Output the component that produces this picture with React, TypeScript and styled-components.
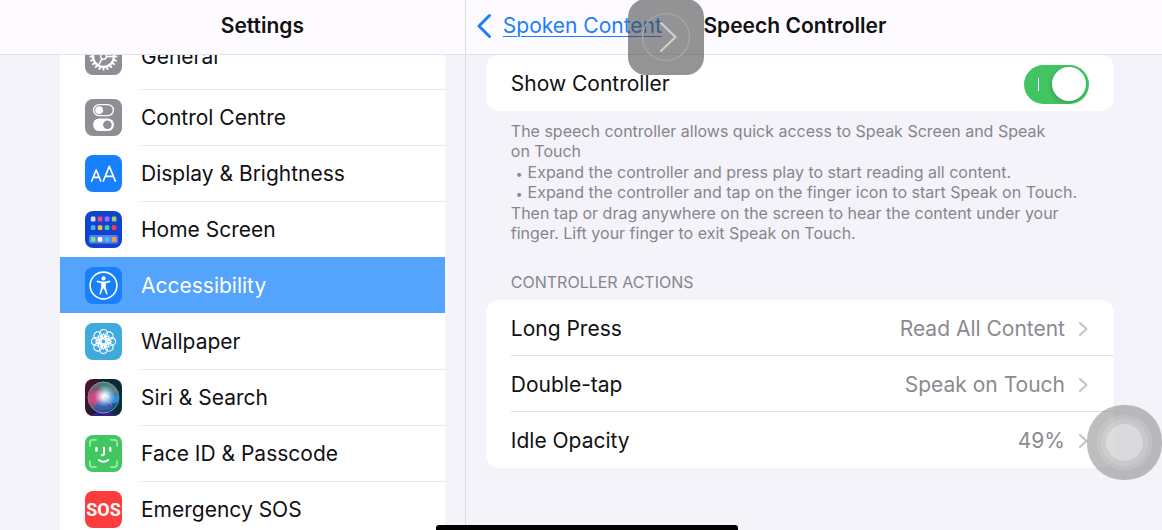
import React from "react";
import styled, { createGlobalStyle } from "styled-components";

const GlobalStyle = createGlobalStyle`
  * { box-sizing: border-box; }
  body {
    margin: 0;
    background: #f4f3fa;
    color: #111113;
    font-family: Inter, "Liberation Sans", sans-serif;
    font-size: 21px;
    line-height: 28px;
  }
`;

const Screen = styled.div`
  display: flex;
  height: 100vh;
  overflow: hidden;
`;

const Sidebar = styled.nav`
  flex: 0 0 40%;
  display: flex;
  flex-direction: column;
  min-width: 0;
`;

const Detail = styled.main`
  flex: 1;
  display: flex;
  flex-direction: column;
  min-width: 0;
  border-left: 1px solid #dcdbe2;
`;

const Bar = styled.header`
  flex: none;
  height: 55px;
  background: #fdfbff;
  border-bottom: 1px solid #e3e2ea;
  align-items: center;
`;

const SidebarBar = styled(Bar)`
  display: flex;
  justify-content: center;
  padding: 0 0 2px 60px;
`;

const DetailBar = styled(Bar)`
  display: grid;
  grid-template-columns: 1fr auto 1fr;
  padding: 0 48px 2px 10px;
`;

const Title = styled.h1`
  margin: 0;
  font-size: 21px;
  line-height: 28px;
  font-weight: 600;
  white-space: nowrap;
`;

const BackLink = styled.a`
  display: flex;
  align-items: center;
  gap: 10px;
  color: #1c7ffa;
  text-decoration: none;
  white-space: nowrap;

  span {
    text-decoration: underline;
    text-decoration-thickness: 1px;
    text-underline-offset: 3px;
  }
`;

const ListViewport = styled.div`
  flex: 1;
  min-height: 0;
  overflow: hidden;
  padding: 0 20px 0 60px;
`;

const List = styled.ul`
  list-style: none;
  margin: -27px 0 0;
  padding: 0;
  background: #fff;

  li:first-child {
    padding-bottom: 5px;
  }
`;

const ItemLabel = styled.span<{ $line: boolean }>`
  flex: 1;
  display: flex;
  align-items: center;
  border-top: 1px solid ${(p) => (p.$line ? "#e7e6ea" : "transparent")};
`;

const ItemLink = styled.a<{ $selected: boolean }>`
  display: flex;
  gap: 19px;
  height: 56px;
  padding-left: 25px;
  color: ${(p) => (p.$selected ? "#fff" : "inherit")};
  background: ${(p) => (p.$selected ? "#54a3fc" : "transparent")};
  text-decoration: none;
`;

const IconSvg = styled.svg`
  flex: none;
  align-self: center;
  display: block;
`;

const DetailBody = styled.div`
  flex: 1;
  min-height: 0;
  overflow: hidden;
  padding: 0 48px 0 20px;
`;

const Card = styled.section`
  background: #fff;
  border-radius: 13px;
  padding-left: 25px;
`;

const SettingRow = styled.div`
  display: flex;
  align-items: center;
  justify-content: space-between;
  height: 56px;
  padding: 2px 25px 0 0;
`;

const ActionRow = styled.button`
  display: flex;
  align-items: center;
  width: 100%;
  height: 56px;
  padding: 3px 25px 0 0;
  border: 0;
  border-bottom: 1px solid #e2e1e6;
  background: none;
  font: inherit;
  color: inherit;
  text-align: left;

  &:last-child {
    border-bottom-color: transparent;
  }
`;

const ActionName = styled.span`
  flex: 1;
`;

const ActionValue = styled.span`
  color: #8b8a90;
  margin-right: 12px;
`;

const Switch = styled.input`
  appearance: none;
  display: flex;
  align-items: center;
  justify-content: space-between;
  width: 65px;
  height: 39px;
  margin: 0;
  padding: 0 3px 0 14px;
  border-radius: 20px;
  background: #43c463;

  &::before {
    content: "";
    width: 1px;
    height: 13px;
    background: #fff;
  }

  &::after {
    content: "";
    width: 34px;
    height: 34px;
    border-radius: 50%;
    background: #fff;
    box-shadow: -1px 2px 4px rgba(0, 0, 0, 0.18);
  }
`;

const Note = styled.div`
  margin: 10px 0 0 25px;
  font-size: 16px;
  line-height: 20px;
  color: #86858c;
  white-space: nowrap;

  p {
    margin: 0;
  }

  ul {
    margin: 1px 0;
    padding: 0;
    list-style: none;
  }

  li::before {
    content: "•";
    margin: 0 5px;
    font-size: 12px;
    line-height: 0;
  }
`;

const SectionTitle = styled.h2`
  margin: 29px 0 8px 25px;
  font-size: 16px;
  line-height: 20px;
  font-weight: 400;
  color: #86858c;
`;

const SpeechControl = styled.button`
  position: fixed;
  top: -1px;
  left: 628px;
  width: 76px;
  height: 76px;
  padding: 0;
  border: 0;
  border-radius: 18px;
  background: rgba(70, 70, 70, 0.58);
`;

const AssistiveTouch = styled.button`
  position: fixed;
  right: 0;
  top: 405px;
  width: 75px;
  height: 75px;
  padding: 0;
  border: 0;
  border-radius: 36px;
  background: rgba(120, 118, 120, 0.48);
`;

const HomeIndicator = styled.div`
  position: fixed;
  bottom: 0;
  left: 436px;
  width: 302px;
  height: 5px;
  border-radius: 3px 3px 0 0;
  background: #000;
`;

function Tile({ fill, children }: { fill: string; children: React.ReactNode }) {
  return (
    <IconSvg width="37" height="37" viewBox="0 0 37 37" aria-hidden="true">
      <rect width="37" height="37" rx="8" fill={fill} />
      {children}
    </IconSvg>
  );
}

const range = (n: number) => Array.from({ length: n }, (_, i) => i);

const GeneralIcon = () => (
  <Tile fill="#8f8e94">
    <g stroke="#fff" fill="none">
      <circle cx="18.5" cy="18.5" r="10.4" strokeWidth="2.2" />
      {range(20).map((i) => (
        <path key={i} d="M18.5 7.6V4.6" strokeWidth="1.9" transform={`rotate(${i * 18} 18.5 18.5)`} />
      ))}
      <circle cx="18.5" cy="18.5" r="2.8" strokeWidth="1.4" />
      {[0, 120, 240].map((a) => (
        <path key={a} d="M21.3 18.5H29" strokeWidth="1.7" transform={`rotate(${a} 18.5 18.5)`} />
      ))}
    </g>
  </Tile>
);

const ControlIcon = () => (
  <Tile fill="#8f8e94">
    <rect x="8.6" y="5.6" width="19.8" height="11" rx="5.5" fill="none" stroke="#fff" strokeWidth="1.4" />
    <circle cx="14.2" cy="11.1" r="3.9" fill="#fff" />
    <rect x="8" y="19.4" width="21" height="12.6" rx="6.3" fill="#fff" />
    <circle cx="22.4" cy="25.7" r="4.3" fill="#8f8e94" />
  </Tile>
);

const DisplayIcon = () => (
  <Tile fill="#1980fb">
    <g fill="none" stroke="#fff" strokeWidth="1.7" strokeLinecap="round" strokeLinejoin="round">
      <path d="M6.7 26L11.2 15L15.7 26M8.3 22.4H14.1" />
      <path d="M18.3 26L24.3 11.4L30.3 26M20.4 21.4H28.2" />
    </g>
  </Tile>
);

const homeColors = [
  ["#d8dcea", "#f4496c", "#a66bfa", "#a9cf55"],
  ["#34b9f5", "#fdbb2c", "#45cfa4", "#f23e42"],
  ["#6ce689", "#ffffff", "#36c4fb", "#f79a53"],
];

const HomeIcon = () => (
  <Tile fill="#1043d2">
    <rect x="4" y="24" width="29" height="8.6" rx="2" fill="#5a80e4" />
    {homeColors.map((row, r) =>
      row.map((c, i) => (
        <rect key={`${r}-${i}`} x={5.8 + i * 7} y={[5.6, 14.2, 26][r]} width="4.6" height="4.8" rx="1.2" fill={c} />
      ))
    )}
  </Tile>
);

const AccessibilityIcon = () => (
  <Tile fill="#1980fb">
    <circle cx="18.5" cy="18.5" r="13.4" fill="none" stroke="#fff" strokeWidth="1.6" />
    <circle cx="18.5" cy="11.4" r="2.1" fill="#fff" />
    <path
      d="M11.9 13.6Q11.1 14.9 12.3 15.3L16.2 16.2V20.2L14.5 26.6Q14.5 27.9 15.7 27.4L18.1 21.4H18.9L21.3 27.4Q22.5 27.9 22.5 26.6L20.8 20.2V16.2L24.7 15.3Q25.9 14.9 25.1 13.6L20.4 14.4H16.6Z"
      fill="#fff"
    />
  </Tile>
);

const WallpaperIcon = () => (
  <Tile fill="#40aadd">
    <g fill="none" stroke="#fff" strokeWidth="1.1">
      {range(8).map((i) => (
        <g key={i} transform={`rotate(${i * 45} 18.5 18.5)`}>
          <circle cx="18.5" cy="10.4" r="3.9" />
          <path d="M18.5 16Q16.2 13.4 18.5 10.8Q20.8 13.4 18.5 16Z" />
        </g>
      ))}
      <circle cx="18.5" cy="18.5" r="2.6" />
    </g>
  </Tile>
);

const SiriIcon = () => (
  <Tile fill="url(#siriBase)">
    <defs>
      <linearGradient id="siriBase" x1="0" y1="0" x2="1" y2="0.3">
        <stop offset="0" stopColor="#5c0f30" />
        <stop offset="0.45" stopColor="#1a1f2f" />
        <stop offset="1" stopColor="#0b2e36" />
      </linearGradient>
      <radialGradient id="siriGlow">
        <stop offset="0" stopColor="#fff" />
        <stop offset="0.3" stopColor="#f2f9ff" stopOpacity="0.85" />
        <stop offset="1" stopColor="#b5d8ec" stopOpacity="0" />
      </radialGradient>
      <linearGradient id="siriOrb" x1="0.2" y1="0" x2="0.6" y2="1">
        <stop offset="0" stopColor="#3a7a72" />
        <stop offset="0.5" stopColor="#6b8093" />
        <stop offset="1" stopColor="#1d3a80" />
      </linearGradient>
      <linearGradient id="siriRing" x1="0" y1="0" x2="1" y2="0">
        <stop offset="0" stopColor="#d8578a" />
        <stop offset="0.5" stopColor="#6fb5a6" />
        <stop offset="1" stopColor="#3a9eb5" />
      </linearGradient>
    </defs>
    <path d="M5 36Q18 30 31 36Q30 37 28 37H9Q7 37 5 36Z" fill="#37208f" />
    <circle cx="18.5" cy="18.5" r="15.5" fill="url(#siriOrb)" stroke="url(#siriRing)" />
    <path d="M5 13Q9 6 16 6L20 18L7 27Q3 20 5 13Z" fill="#a23d6a" opacity="0.6" />
    <ellipse cx="11.5" cy="19" rx="7.5" ry="7.2" fill="#e0447f" opacity="0.75" />
    <ellipse cx="26.5" cy="19.8" rx="7.5" ry="4.6" fill="#2e93e8" opacity="0.9" />
    <path d="M9 28C13 22 19 18 20 18C20 22 24 27 28 29Q18 35 9 28Z" fill="#2f62c4" opacity="0.65" />
    <path d="M12 8Q21 9 20 18Q24 10 29 10Q23 4 12 8Z" fill="#3ba485" opacity="0.6" />
    <circle cx="19.5" cy="17.5" r="10.5" fill="url(#siriGlow)" />
    <path d="M19.5 18L27 27" stroke="#f28db3" strokeWidth="0.8" opacity="0.8" />
  </Tile>
);

const FaceIcon = () => (
  <Tile fill="#40c760">
    <g fill="none" strokeLinecap="round">
      <path
        d="M4.8 11V8Q4.8 4.8 8 4.8H11M26 4.8H29Q32.2 4.8 32.2 8V11M32.2 26V29Q32.2 32.2 29 32.2H26M11 32.2H8Q4.8 32.2 4.8 29V26"
        stroke="#a6e5b3"
        strokeWidth="1.7"
      />
      <path d="M11.4 13V15.4M25.2 13V15.4" stroke="#fff" strokeWidth="2.5" />
      <path d="M19 12.6V18.4Q19 20.3 16.8 20.3M13.8 25Q18.5 28.6 23.2 25" stroke="#fff" strokeWidth="2" />
    </g>
  </Tile>
);

const SosIcon = () => (
  <Tile fill="#fd3d3b">
    <text
      x="18.5"
      y="25"
      textAnchor="middle"
      fill="#fff"
      fontFamily='"Liberation Sans Narrow", Roboto, sans-serif'
      fontSize="18"
      fontWeight="700"
    >
      SOS
    </text>
  </Tile>
);

const items = [
  { label: "General", Icon: GeneralIcon },
  { label: "Control Centre", Icon: ControlIcon },
  { label: "Display & Brightness", Icon: DisplayIcon },
  { label: "Home Screen", Icon: HomeIcon },
  { label: "Accessibility", Icon: AccessibilityIcon },
  { label: "Wallpaper", Icon: WallpaperIcon },
  { label: "Siri & Search", Icon: SiriIcon },
  { label: "Face ID & Passcode", Icon: FaceIcon },
  { label: "Emergency SOS", Icon: SosIcon },
];

const selected = 4;

const actions = [
  { name: "Long Press", value: "Read All Content" },
  { name: "Double-tap", value: "Speak on Touch" },
  { name: "Idle Opacity", value: "49%" },
];

export default function App() {
  return (
    <>
      <GlobalStyle />
      <Screen>
        <Sidebar aria-label="Settings">
          <SidebarBar>
            <Title>Settings</Title>
          </SidebarBar>
          <ListViewport>
            <List>
              {items.map(({ label, Icon }, i) => (
                <li key={label}>
                  <ItemLink href="#" $selected={i === selected}>
                    <Icon />
                    <ItemLabel $line={i !== selected && i !== selected + 1}>{label}</ItemLabel>
                  </ItemLink>
                </li>
              ))}
            </List>
          </ListViewport>
        </Sidebar>
        <Detail>
          <DetailBar>
            <BackLink href="#">
              <svg width="17" height="26" viewBox="0 0 17 26" fill="none" aria-hidden="true">
                <path d="M13.5 2.5L3 13L13.5 23.5" stroke="#1c7ffa" strokeWidth="3" strokeLinecap="round" strokeLinejoin="round" />
              </svg>
              <span>Spoken Content</span>
            </BackLink>
            <Title>Speech Controller</Title>
          </DetailBar>
          <DetailBody>
            <Card>
              <SettingRow>
                <label htmlFor="show-controller">Show Controller</label>
                <Switch id="show-controller" type="checkbox" defaultChecked />
              </SettingRow>
            </Card>
            <Note>
              <p>
                The speech controller allows quick access to Speak Screen and Speak
                <br />
                on Touch
              </p>
              <ul>
                <li>Expand the controller and press play to start reading all content.</li>
                <li>Expand the controller and tap on the finger icon to start Speak on Touch.</li>
              </ul>
              <p>
                Then tap or drag anywhere on the screen to hear the content under your
                <br />
                finger. Lift your finger to exit Speak on Touch.
              </p>
            </Note>
            <SectionTitle>CONTROLLER ACTIONS</SectionTitle>
            <Card>
              {actions.map((a) => (
                <ActionRow key={a.name} type="button">
                  <ActionName>{a.name}</ActionName>
                  <ActionValue>{a.value}</ActionValue>
                  <svg width="12" height="16" viewBox="0 0 12 16" fill="none" aria-hidden="true">
                    <path d="M3 2L9.5 8L3 14" stroke="#c3c2c7" strokeWidth="2" strokeLinecap="round" strokeLinejoin="round" />
                  </svg>
                </ActionRow>
              ))}
            </Card>
          </DetailBody>
        </Detail>
      </Screen>
      <SpeechControl type="button" aria-label="Expand speech controller">
        <svg width="76" height="76" viewBox="0 0 76 76" fill="none" aria-hidden="true">
          <circle cx="38" cy="38" r="23.5" stroke="#a9a8aa" strokeWidth="1.2" />
          <path d="M33 24L47.5 38L33 52" stroke="#d0cfd1" strokeWidth="2.2" strokeLinecap="round" strokeLinejoin="round" />
        </svg>
      </SpeechControl>
      <AssistiveTouch type="button" aria-label="AssistiveTouch menu">
        <svg width="75" height="75" viewBox="0 0 75 75" fill="#fff" aria-hidden="true">
          <circle cx="37.5" cy="37.5" r="28" fillOpacity="0.12" />
          <circle cx="37.5" cy="37.5" r="23.5" fillOpacity="0.14" />
          <circle cx="37.5" cy="37.5" r="18.5" fillOpacity="0.3" />
        </svg>
      </AssistiveTouch>
      <HomeIndicator />
    </>
  );
}
